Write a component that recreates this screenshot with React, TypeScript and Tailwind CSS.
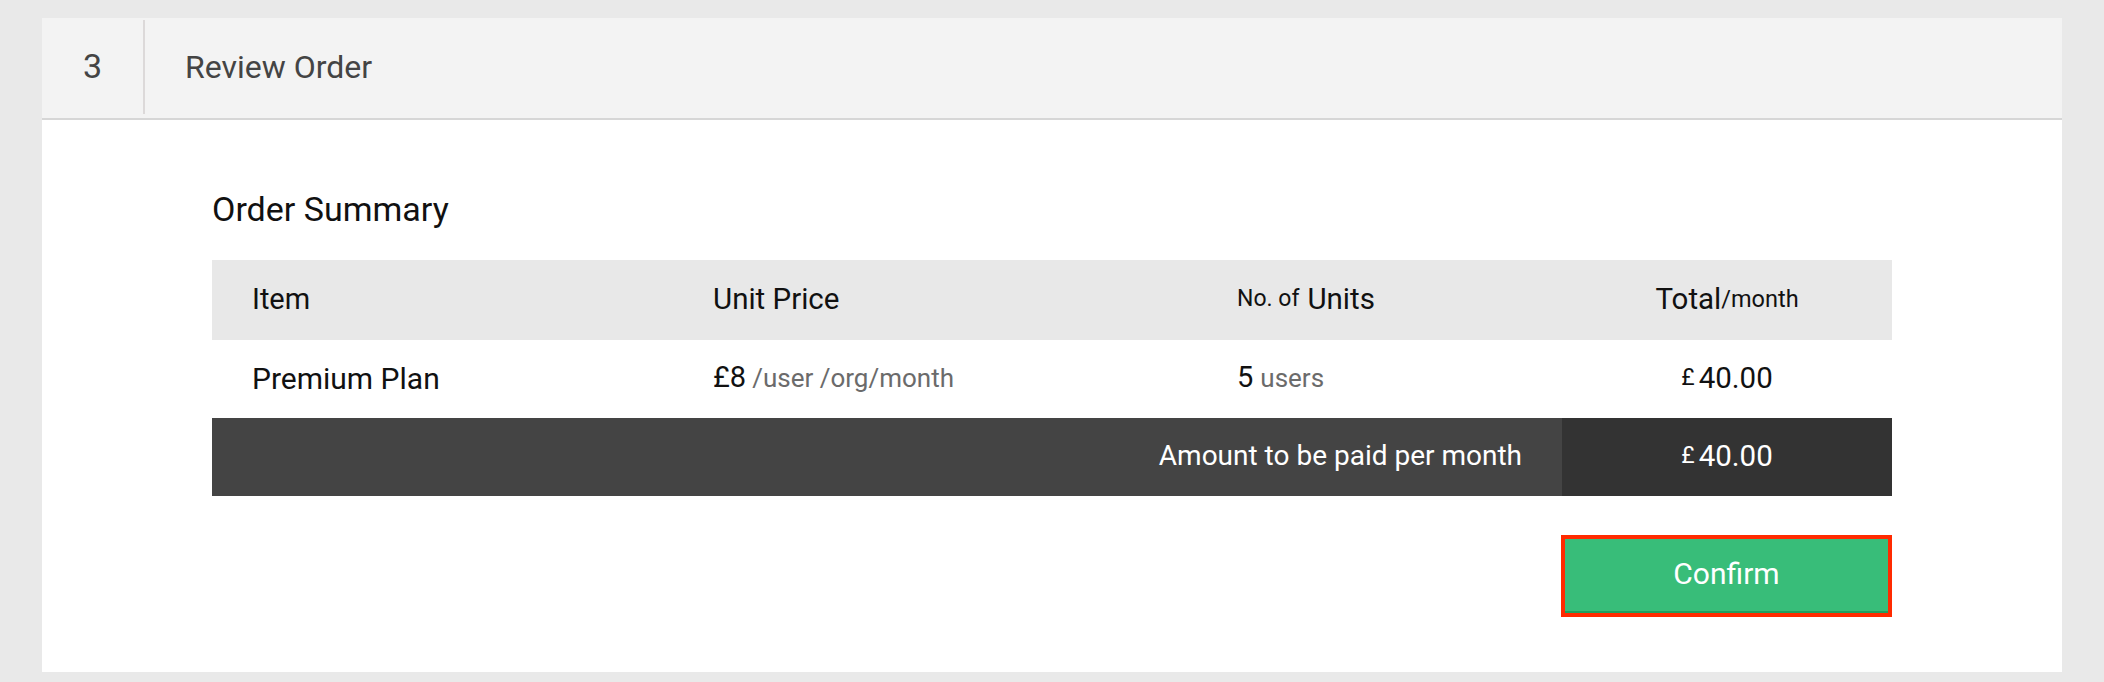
export default function App() {
  return (
    <div className="min-h-screen bg-[#e9e9e9] px-[42px] pt-[18px] pb-[10px] font-['Roboto',sans-serif]">
      <div className="bg-white">
        {/* step header */}
        <div className="flex h-[102px] border-b-2 border-[#d6d6d6] bg-[#f3f3f3]">
          <div className="flex w-[101px] items-center justify-center pb-[3px] text-[34px] text-[#444]">3</div>
          <div className="mt-[2px] mb-[4px] w-[2px] bg-[#dcd9d9]" />
          <div className="flex items-center pb-[3px] pl-[40px] text-[32px] text-[#444]">Review Order</div>
        </div>

        {/* order summary */}
        <div className="flex flex-col px-[170px] pt-[69px] pb-[55px] text-[#111]">
          <h2 className="text-[34px] leading-[40px]">Order Summary</h2>

          <div className="mt-[31px] grid grid-cols-[501px_524px_325px_330px]">
            <div className="flex h-[80px] items-center bg-[#e8e8e8] pb-[1px] pl-[40px] text-[29px]">Item</div>
            <div className="flex h-[80px] items-center bg-[#e8e8e8] pb-[1px] text-[29.5px]">Unit Price</div>
            <div className="flex h-[80px] items-center bg-[#e8e8e8] pb-[1px] text-[29.5px]">
              <span className="text-[23px]">No. of</span>
              <span className="ml-[8px]">Units</span>
            </div>
            <div className="flex h-[80px] items-center justify-center bg-[#e8e8e8] pb-[1px] text-[29.5px]">
              <span>Total</span>
              <span className="text-[23.5px]">/month</span>
            </div>

            <div className="flex h-[78px] items-center pb-[2px] pl-[40px] text-[30px]">Premium Plan</div>
            <div className="flex h-[78px] items-center pb-[2px] text-[29px]">
              <span>£8</span>
              <span className="ml-[6px] text-[26px] text-[#6b6b6b]">/user /org/month</span>
            </div>
            <div className="flex h-[78px] items-center pb-[2px] text-[29px]">
              <span>5</span>
              <span className="ml-[7px] text-[26px] text-[#6b6b6b]">users</span>
            </div>
            <div className="flex h-[78px] items-center justify-center pb-[2px] text-[29.5px]">
              <span className="mr-[4px] text-[23px]">£</span>
              <span>40.00</span>
            </div>

            <div className="col-span-3 flex h-[78px] items-center justify-end bg-[#444444] pb-[2px] pr-[40px] text-[28px] text-white">
              Amount to be paid per month
            </div>
            <div className="flex h-[78px] items-center justify-center bg-[#333333] pb-[2px] text-[29.5px] text-white">
              <span className="mr-[4px] text-[23px]">£</span>
              <span>40.00</span>
            </div>
          </div>

          <button className="mt-[39px] h-[82px] w-[331px] self-end border-4 border-[#ff2a00] bg-[#38bd79] pb-[5px] text-[30px] text-white shadow-[inset_0_-2px_0_#1f9f5e]">
            Confirm
          </button>
        </div>
      </div>
    </div>
  )
}
